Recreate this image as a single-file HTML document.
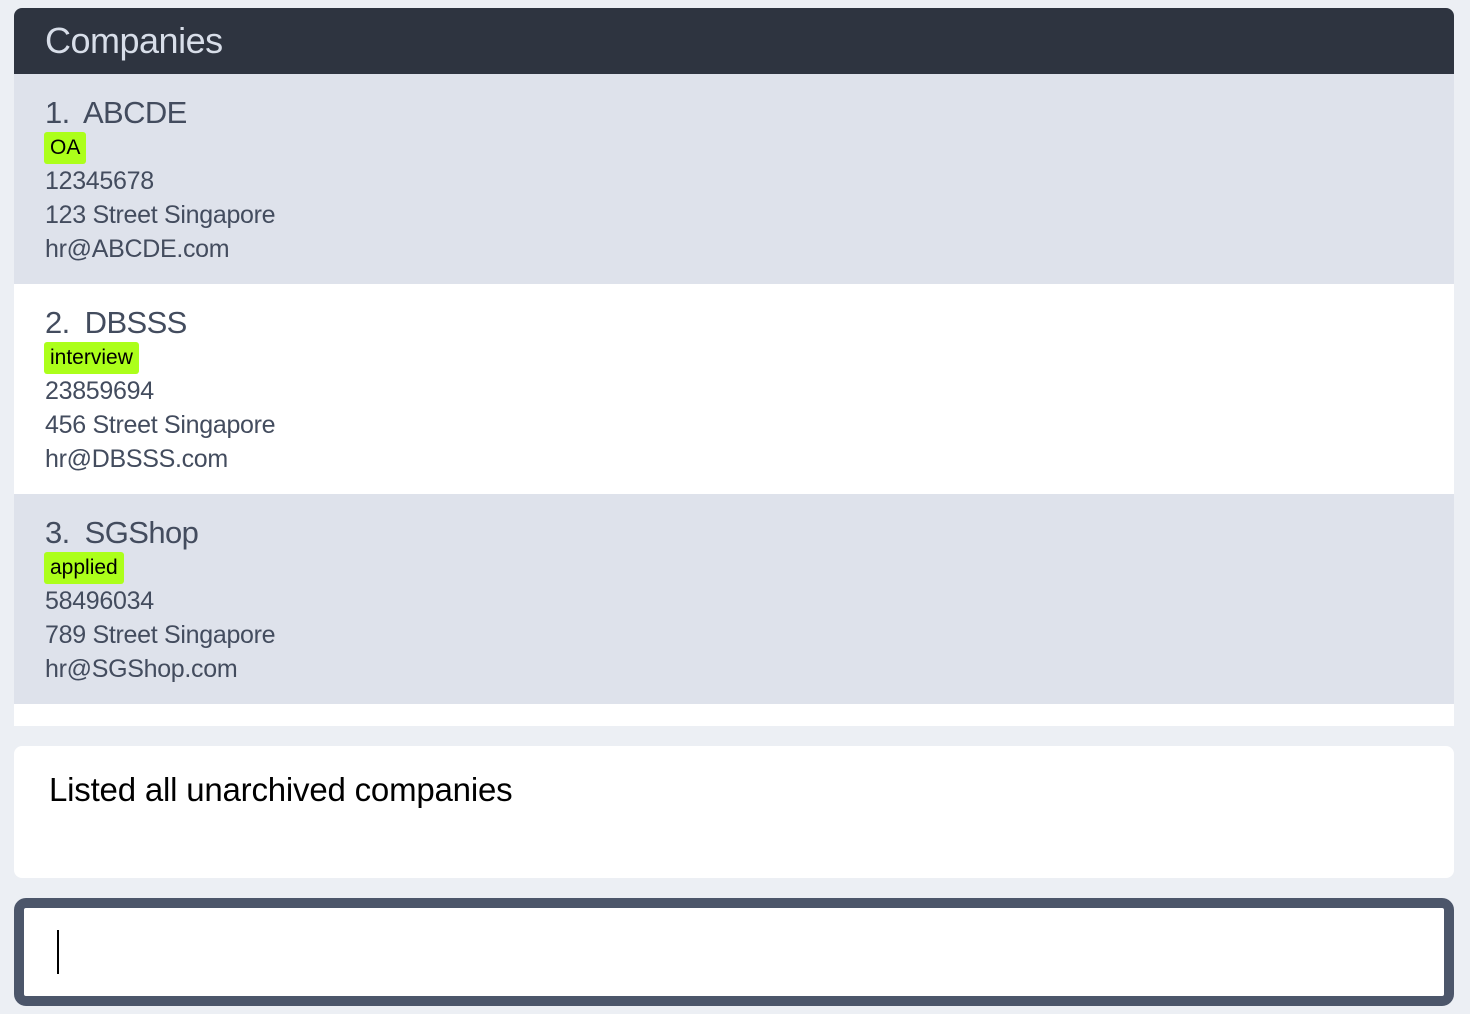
<!DOCTYPE html>
<html><head><style>
body{margin:0;width:1470px;height:1014px;background:#eceff4;font-family:"Liberation Sans",sans-serif;position:relative;overflow:hidden}
.panel{position:absolute;left:14px;top:8px;width:1440px;height:718px;background:#fff;border-radius:8px 8px 0 0;overflow:hidden}
.hdr{height:66px;background:#2e3440;color:#d8dee9;font-size:36px;line-height:66px;padding-left:31px;letter-spacing:-0.5px}
.row{height:210px;position:relative;color:#434c5e}
.alt{background:#dee2eb}
.name{position:absolute;left:31px;top:19px;font-size:31px;line-height:40px;letter-spacing:-0.6px;word-spacing:7px}
.tag{position:absolute;left:30px;top:58px;height:32px;line-height:32px;background:#acff1a;color:#000;font-size:21px;padding:0 6px;border-radius:3px}
.l{position:absolute;left:31px;font-size:25px;line-height:34px;letter-spacing:-0.3px}
.res{position:absolute;left:14px;top:746px;width:1440px;height:132px;background:#fff;border-radius:8px}
.res div{position:absolute;left:35px;top:25px;font-size:33px;color:#000;letter-spacing:-0.2px}
.cmd{position:absolute;left:14px;top:898px;width:1420px;height:88px;border:10px solid #4c566a;border-radius:12px;background:#fff}
.cur{position:absolute;left:33px;top:22px;width:2px;height:44px;background:#000}
</style></head><body>
<div class="panel">
<div class="hdr">Companies</div>
<div class="row alt"><div class="name">1. ABCDE</div><div class="tag">OA</div>
<div class="l" style="top:90px">12345678</div><div class="l" style="top:124px">123 Street Singapore</div><div class="l" style="top:158px">hr@ABCDE.com</div></div>
<div class="row"><div class="name">2. DBSSS</div><div class="tag">interview</div>
<div class="l" style="top:90px">23859694</div><div class="l" style="top:124px">456 Street Singapore</div><div class="l" style="top:158px">hr@DBSSS.com</div></div>
<div class="row alt"><div class="name">3. SGShop</div><div class="tag">applied</div>
<div class="l" style="top:90px">58496034</div><div class="l" style="top:124px">789 Street Singapore</div><div class="l" style="top:158px">hr@SGShop.com</div></div>
</div>
<div class="res"><div>Listed all unarchived companies</div></div>
<div class="cmd"><div class="cur"></div></div>
</body></html>
